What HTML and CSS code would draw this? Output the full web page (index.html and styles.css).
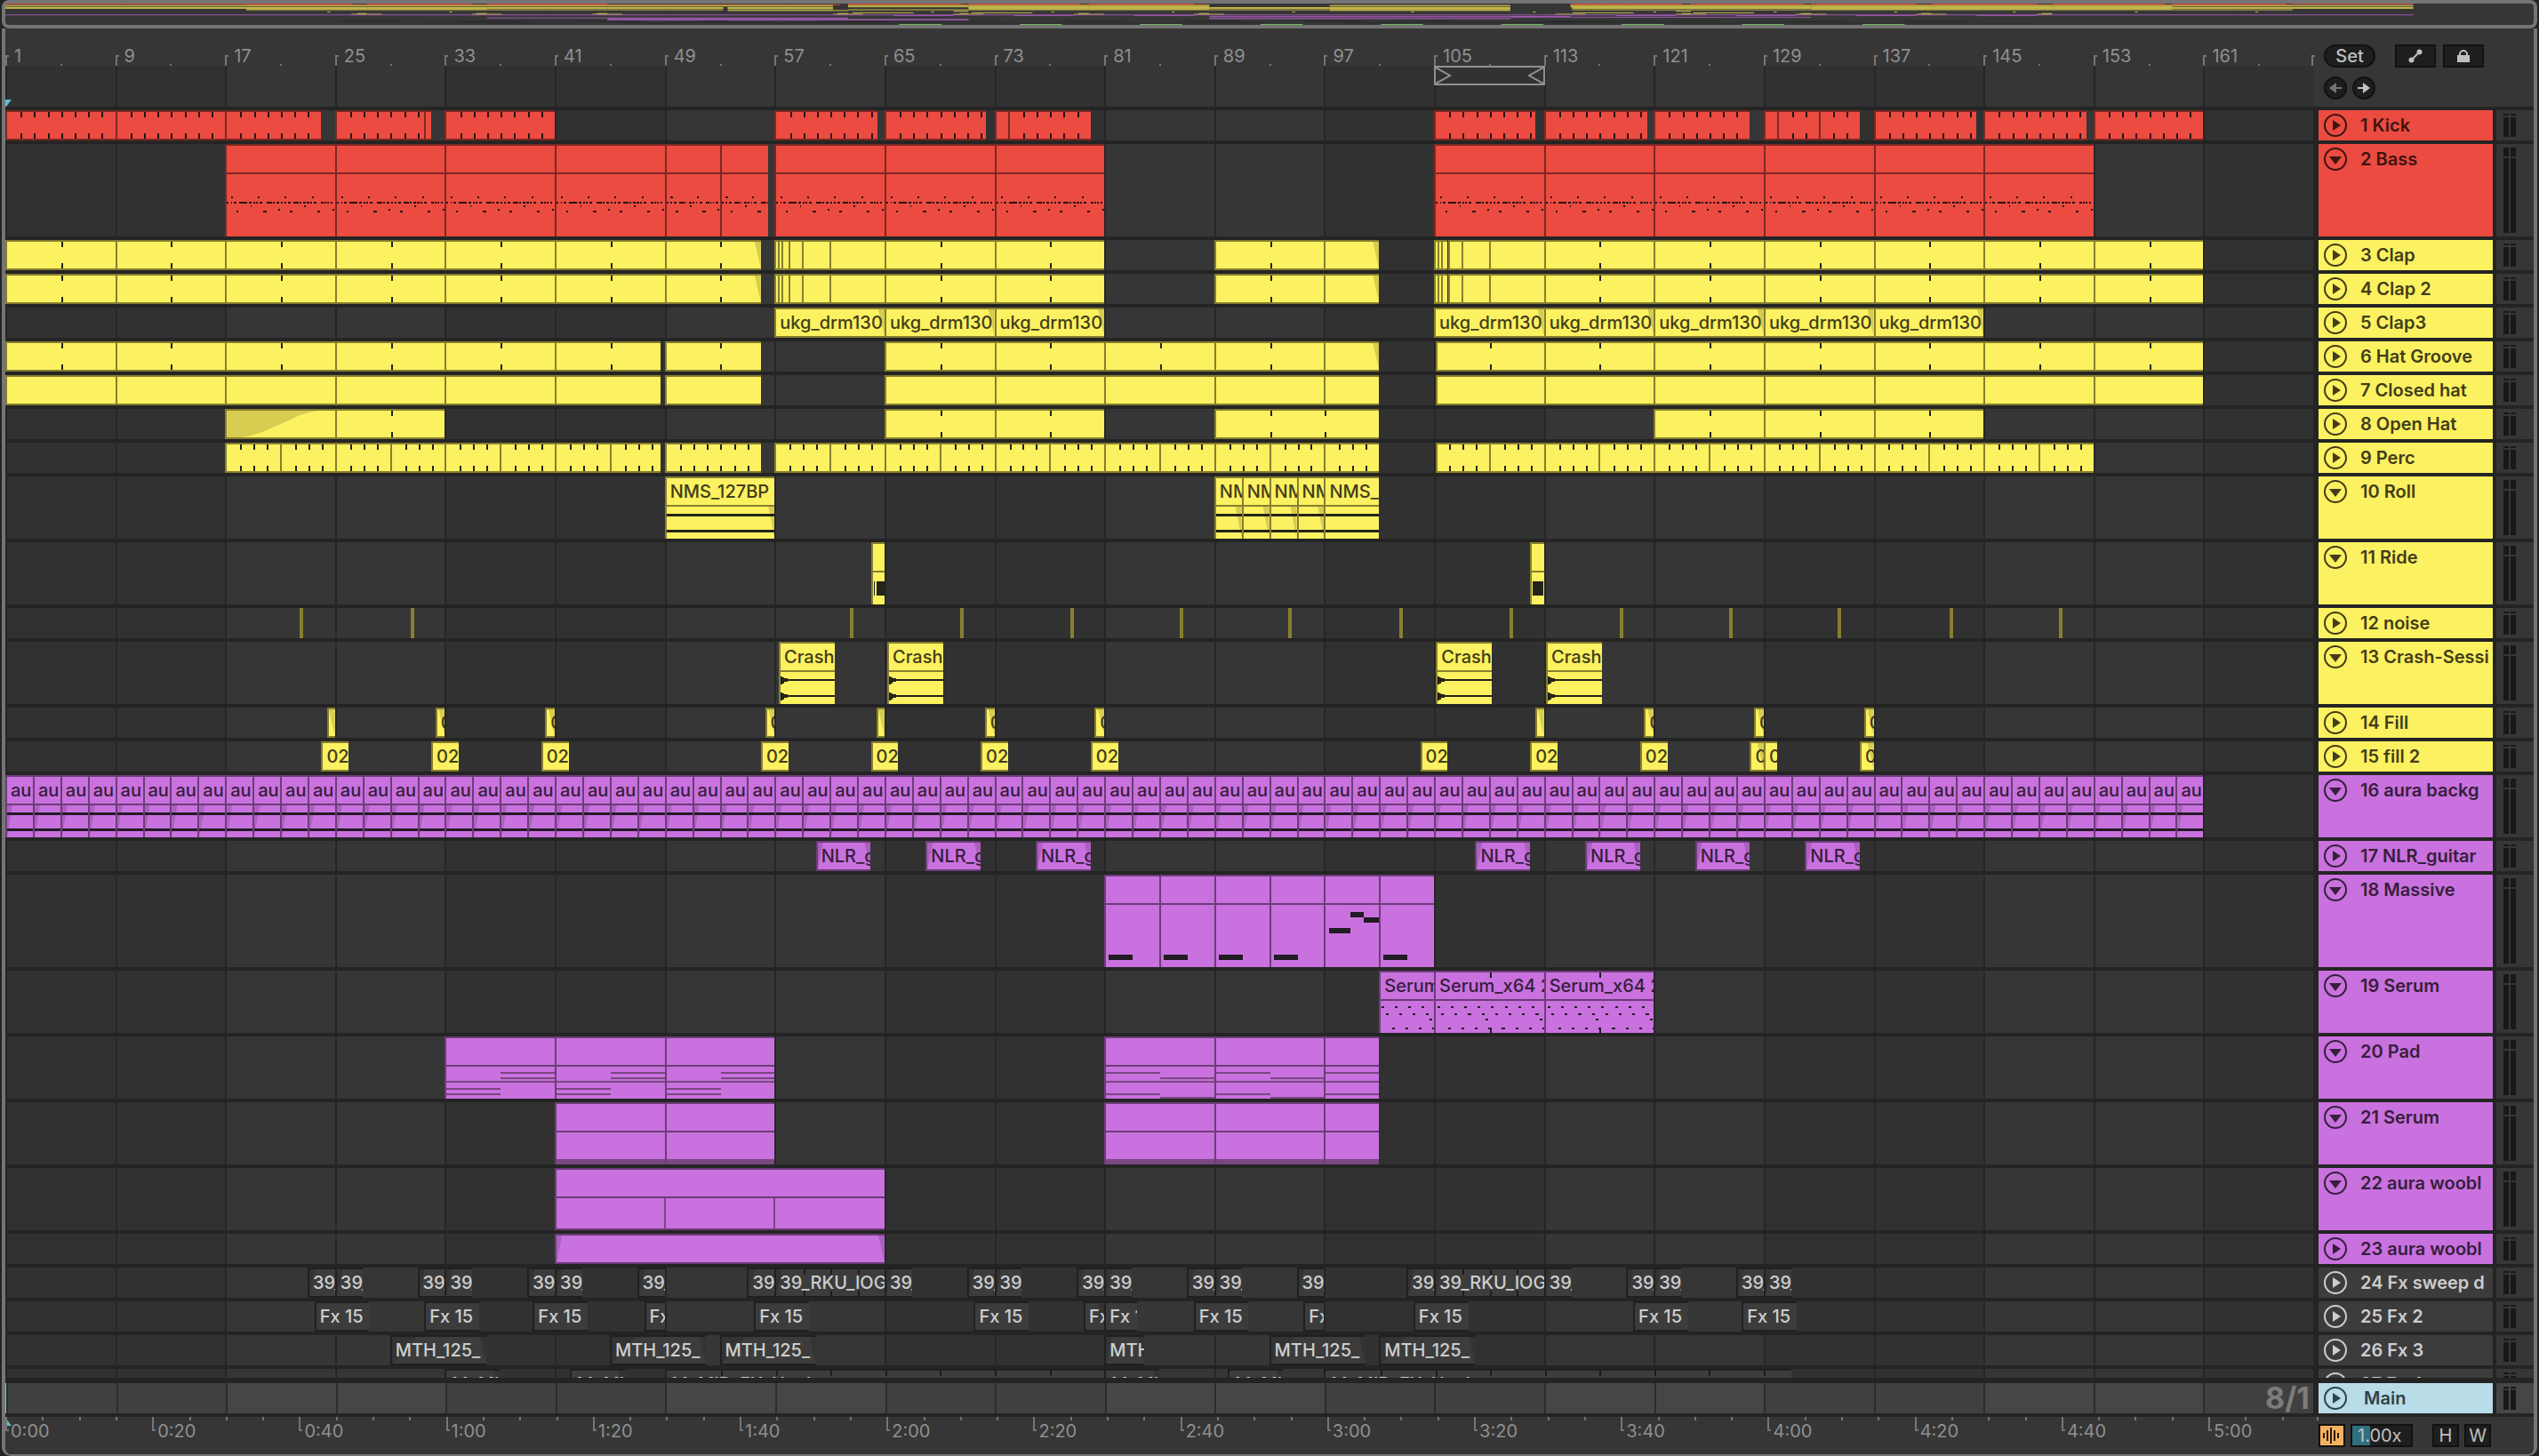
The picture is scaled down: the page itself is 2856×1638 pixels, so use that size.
FILE: index.html
```html
<!DOCTYPE html>
<html lang="en">
<head>
  <meta charset="UTF-8" />
  <meta name="viewport" content="width=device-width, initial-scale=1.0"/>
  <title>Arrangement</title>
  <link rel="stylesheet" href="styles.css">
</head>
<body>
  <div class="overview">
    <svg id="overview" viewBox="0 0 168 29" preserveAspectRatio="none" aria-label="Overview"></svg>
  </div>

  <main class="arrangement">
    <header class="top">
      <div class="timeline">
        <div class="bar-ruler" id="barRuler"></div>
        <div class="scrub grid" id="scrub">
          <svg class="playhead" viewBox="0 0 7 8"><path d="M0 0h7L1 8H0z"/></svg>
        </div>
      </div>
      <div class="top-controls">
        <div class="control-row">
          <button type="button" class="pill">Set</button>
          <button type="button" class="box wide" aria-label="Automation mode">
            <svg width="16" height="16" viewBox="0 0 16 16"><path d="M4 12L12 4" stroke="currentColor" stroke-width="2"/><circle cx="3.5" cy="12.5" r="3" fill="currentColor"/><circle cx="12.5" cy="3.5" r="3" fill="currentColor"/></svg>
          </button>
          <button type="button" class="box wide" aria-label="Lock envelopes">
            <svg width="14" height="14" viewBox="0 0 14 14"><path d="M3 7V5a4 4 0 0 1 8 0v2" fill="none" stroke="currentColor" stroke-width="2"/><path d="M0 6h14v8H0z" fill="currentColor"/></svg>
          </button>
        </div>
        <div class="control-row nav">
          <button type="button" class="round dim" aria-label="Previous locator">
            <svg width="14" height="12" viewBox="0 0 14 12"><path d="M0 6L8 0v5h6v2H8v5z" fill="currentColor"/></svg>
          </button>
          <button type="button" class="round" aria-label="Next locator">
            <svg width="14" height="12" viewBox="0 0 14 12"><path d="M14 6L6 0v5H0v2h6v5z" fill="currentColor"/></svg>
          </button>
        </div>
      </div>
    </header>

    <div class="tracks" id="tracks"></div>

    <section class="track main-track">
      <div class="lane grid"><span class="quantize">8/1</span></div>
      <div class="track-head blue">
        <button type="button" class="fold" aria-label="Unfold Main">
          <svg viewBox="0 0 26 26"><circle cx="13" cy="13" r="12"/><path d="M10 7l9 6-9 6z"/></svg>
        </button>
        <span class="track-name">Main</span>
      </div>
      <div class="meter"><i></i><i></i></div>
    </section>

    <footer class="bottom">
      <div class="time-ruler" id="timeRuler">
        <svg class="playhead" viewBox="0 0 7 8"><path d="M0 0h1l6 8H0z"/></svg>
      </div>
      <div class="bottom-controls">
        <button type="button" class="box wave" aria-label="Waveform zoom">
          <svg width="20" height="18" viewBox="0 0 20 18"><path d="M1 6v6M5 3v12M9 0v18M13 3v12M17 6v6" stroke="currentColor" stroke-width="2" fill="none"/></svg>
        </button>
        <input class="zoom" type="text" value="1.00x" aria-label="Zoom">
        <button type="button" class="box h">H</button>
        <button type="button" class="box">W</button>
      </div>
    </footer>
  </main>
  <script src="script.js"></script>
</body>
</html>
```
FILE: styles.css
```css
* {
  box-sizing: border-box;
}
body {
  margin: 0;
  padding: 0 2px;
  height: 100vh;
  display: flex;
  flex-direction: column;
  background: #242424;
  color: #8f8f8f;
  font-family: Inter, "Liberation Sans", sans-serif;
  font-size: 20px;
  overflow: hidden;
}
button, input {
  font: inherit;
  margin: 0;
  padding: 0;
}
.overview {
  flex: none;
  height: 32px;
  border: 4px solid #757575;
  border-radius: 8px;
  background: #363636;
}
.overview svg {
  display: block;
  width: 100%;
  height: 24px;
}
.arrangement {
  flex: 1;
  min-height: 0;
  display: flex;
  flex-direction: column;
  border: solid #757575;
  border-width: 0 4px 2px;
  border-radius: 0 0 10px 10px;
  overflow: hidden;
}

/* top: ruler + locator controls */
.top {
  flex: none;
  display: flex;
  height: 88px;
  margin-bottom: 4px;
  background: #363636;
}
.timeline {
  flex: 1;
  min-width: 0;
}
.bar-ruler {
  position: relative;
  height: 42px;
}
.bar-ruler .tick {
  position: absolute;
  bottom: 0;
  width: 4px;
  height: 12px;
  border: solid #757575;
  border-width: 2px 0 0 2px;
}
.bar-ruler .dot {
  position: absolute;
  bottom: 0;
  width: 2px;
  height: 2px;
  background: #757575;
}
.bar-ruler .label {
  position: absolute;
  bottom: 0;
  padding-left: 10px;
  line-height: 22px;
}
.scrub {
  position: relative;
  height: 46px;
}
.playhead {
  position: absolute;
  left: 0;
  width: 7px;
  height: 8px;
  fill: #57bfd0;
}
.scrub .playhead {
  bottom: 0;
}
.loop {
  position: absolute;
  top: 0;
  height: 22px;
  border: 2px solid #909090;
  background: #323232;
  display: flex;
  justify-content: space-between;
}
.loop svg {
  width: 18px;
  height: 18px;
  fill: none;
  stroke: #909090;
  stroke-width: 2;
}
.top-controls {
  flex: none;
  width: 248px;
  padding: 18px 0 0 12px;
}
.control-row {
  display: flex;
}
.control-row .wide {
  margin-left: 8px;
}
.control-row .pill + .wide {
  margin-left: 22px;
}
.nav {
  margin-top: 10px;
  gap: 6px;
}
.pill, .round, .box {
  display: flex;
  align-items: center;
  justify-content: center;
  height: 26px;
  border: 2px solid #111;
  background: #1e1e1e;
  color: #c0c0c0;
}
.pill {
  width: 58px;
  border-radius: 13px;
  font-weight: 500;
}
.round {
  width: 26px;
  border-radius: 50%;
}
.round svg {
  flex: none;
}
.round.dim {
  color: #757575;
}
.box {
  width: 30px;
}
.box.wide {
  width: 46px;
}

/* 8 bar lines, shade changes every 16 bars */
.grid {
  background:
    repeating-linear-gradient(90deg, #262626 0 2px, transparent 2px calc(100% * 8 / 168)),
    repeating-linear-gradient(90deg, #313131 0 calc(100% * 16 / 168), #363636 calc(100% * 16 / 168) calc(100% * 32 / 168));
}

.tracks {
  flex: 1;
  min-height: 0;
  display: flex;
  flex-direction: column;
  gap: 4px;
  overflow: hidden;
}
.track {
  flex: none;
  display: flex;
  height: 34px;
}
.track.half {
  height: 70px;
}
.track.tall {
  height: 104px;
}
.lane {
  position: relative;
  flex: 1;
  min-width: 0;
  margin-right: 6px;
  overflow: hidden;
}
.track-head {
  flex: none;
  display: flex;
  align-items: flex-start;
  gap: 15px;
  width: 196px;
  margin-right: 4px;
  padding: 4px 6px;
  overflow: hidden;
  background: var(--clip);
  color: var(--text);
}
.track-name {
  line-height: 26px;
  font-weight: 600;
  white-space: nowrap;
}
.fold {
  flex: none;
  width: 26px;
  height: 26px;
  border: 0;
  background: none;
  color: inherit;
}
.fold svg {
  display: block;
  fill: currentColor;
}
.fold circle {
  fill: none;
  stroke: currentColor;
  stroke-width: 2;
}
.meter {
  flex: none;
  display: flex;
  gap: 2px;
  width: 42px;
  padding: 4px 8px;
  background: #363636;
}
.meter i {
  width: 6px;
  background: linear-gradient(#181818 2px, #363636 2px 4px, #181818 4px);
}
.half .meter i, .tall .meter i {
  background: linear-gradient(#181818 10px, #363636 10px 12px, #181818 12px);
}

.red {
  --clip: #eb4b41;
  --edge: #7d2823;
  --text: #3d1411;
  --note: #241412;
}
.yellow {
  --clip: #fcf160;
  --edge: #877f2f;
  --text: #413d19;
  --note: #24231a;
}
.purple {
  --clip: #c971de;
  --edge: #6c3d78;
  --text: #361e3c;
  --note: #221b24;
}
.grey {
  --clip: #3c3c3c;
  --edge: #202020;
  --text: #cdcdcd;
  --note: #241818;
}
.blue {
  --clip: #b8dce8;
  --text: #32414a;
}

/* clips */
.clip {
  position: absolute;
  top: 0;
  bottom: 0;
  border: solid var(--edge);
  border-width: 2px 0 2px 2px;
  background: var(--clip);
  color: var(--text);
  overflow: hidden;
}
.half .clip, .tall .clip {
  border-bottom-width: 0;
}
.half .clip.closed {
  border-bottom-width: 2px;
}
.clip-name {
  display: block;
  position: relative;
  height: 30px;
  padding-left: 4px;
  line-height: 30px;
  font-weight: 500;
  white-space: nowrap;
}
.half .clip-name, .tall .clip-name {
  height: 32px;
  border-bottom: 2px solid var(--edge);
}
.clip.sliver {
  min-width: 4px;
  background: var(--edge);
}
.clip .tick {
  position: absolute;
  top: 0;
  bottom: 0;
  width: 2px;
  background: linear-gradient(var(--note) 6px, transparent 6px calc(100% - 6px), var(--note) calc(100% - 6px));
}
.fade {
  position: absolute;
  top: 0;
  bottom: 0;
  background: rgba(0, 0, 0, .15);
}
.half .fade {
  top: 32px;
}
.fade.in {
  left: 0;
  width: 6px;
  clip-path: polygon(0 0, 100% 0, 0 100%);
}
.fade.out {
  right: 0;
  width: 7px;
  clip-path: polygon(0 0, 100% 0, 100% 100%);
}
.fade.long {
  left: 0;
  width: 100%;
  clip-path: polygon(0 0, 84% 0, 78% 4%, 68% 16%, 56% 38%, 42% 64%, 30% 84%, 22% 94%, 14% 100%, 0 100%);
}
.fade.wide {
  width: 26%;
}
.notes {
  position: absolute;
  left: 0;
  top: 32px;
  width: 100%;
  height: calc(100% - 32px);
  fill: var(--note);
}
.notes .soft {
  fill: #78487f;
}

/* main track and time ruler */
.main-track {
  margin-top: 6px;
}
.main-track .lane {
  display: flex;
  align-items: center;
  justify-content: flex-end;
  padding-right: 4px;
  border-left: 1px solid #57d0dc;
  background:
    repeating-linear-gradient(90deg, #2c2c2c 0 2px, transparent 2px calc(100% * 8 / 168)),
    repeating-linear-gradient(90deg, #404040 0 calc(100% * 16 / 168), #464646 calc(100% * 16 / 168) calc(100% * 32 / 168));
}
.main-track .track-head {
  gap: 19px;
}
.main-track .meter {
  background: #464646;
}
.quantize {
  font-size: 34px;
  font-weight: 700;
  line-height: 34px;
  color: #7c7c7c;
}
.bottom {
  flex: none;
  display: flex;
  height: 42px;
  margin-top: 4px;
  background: #363636;
}
.time-ruler {
  position: relative;
  flex: 1;
  min-width: 0;
}
.time-ruler .tick {
  position: absolute;
  top: 0;
  width: 4px;
  height: 16px;
  border: solid #757575;
  border-width: 0 0 2px 2px;
}
.time-ruler .dot {
  position: absolute;
  top: 0;
  width: 2px;
  height: 4px;
  background: #757575;
}
.time-ruler .label {
  position: absolute;
  top: 4px;
  padding-left: 6px;
  line-height: 24px;
}
.time-ruler .playhead {
  top: 2px;
}
.bottom-controls {
  flex: none;
  display: flex;
  width: 242px;
  padding-top: 8px;
  gap: 6px;
}
.box.wave {
  background: #f5b060;
  color: #2a1c0c;
}
.zoom {
  width: 70px;
  height: 26px;
  padding-left: 6px;
  border: 2px solid #111;
  background: linear-gradient(90deg, #2f7080 20px, #1e1e1e 20px);
  color: #c0c0c0;
}
.box.h {
  margin-left: 16px;
}
```
FILE: script.js
```js
const BARS = 168;
const pct = (bars) => (bars / BARS * 100) + "%";

// clip: s/e = start/end bar, n = name, t = tick interval, cls, fi/fo = fades, notes = [x, y, w, h] in bars / px
const c = (s, e, o = {}) => ({ s, e, ...o });

// consecutive clips that meet at the given bars
function cuts(points, o = {}) {
  const list = [];
  for (let i = 0; i < points.length - 1; i++) list.push(c(points[i], points[i + 1], o));
  return list;
}

function range(from, to, step) {
  const list = [];
  for (let i = from; i <= to; i += step) list.push(i);
  return list;
}

const bassMid = [[0, .15], [.3, .1], [.55, .2], [.95, .4], [1.4, .1], [1.65, .2], [1.95, .15], [2.2, .1], [2.45, .2], [2.95, .25], [3.25, .12], [3.45, .12], [3.7, .15]];
const bassNotes = [];
for (let i = 0; i < 8; i += 2) {
  bassNotes.push([i + .3, 25, .14, 2], [i + .7, 41, i % 4 ? .24 : .14, 2]);
}
for (let i = 0; i < 8; i += 4) {
  bassMid.forEach(([x, w]) => bassNotes.push([x + i, 31, w, 2]));
  bassNotes.push([i + 1.75, 35, .12, 2], [i + 3.8, 39, .14, 2]);
}

const serumNotes = [];
for (let i = 0; i < 8; i++) {
  serumNotes.push([i + .1, 6, .2, 2], [i + .4, 14, .2, 2], [i + .9, 30, .2, 2]);
  if (i % 4 === 3) serumNotes.push([i + .7, 20, .2, 2]);
}

const wave = (len) => [[0, 8, len, 3], [0, 26, len, 3]];
const crashWave = [[0, 5, .12, 9], [.12, 6, .12, 7], [.24, 7, .3, 4], [.54, 8, 4, 2], [0, 23, .12, 9], [.12, 24, .12, 7], [.24, 25, .3, 4], [.54, 26, 4, 2]];
const low = [[.2, 56, 1.8, 6]];
const padA = [[0, 16, 8, 2], [0, 24, 4, 2], [0, 30, 4, 2], [4, 6, 4, 2], [4, 12, 4, 2]];
const padB = [[0, 6, 4, 2], [0, 16, 8, 2], [0, 30, 4, 2], [4, 12, 4, 2], [4, 34, 4, 2]];
const band = [[-1, 30, 10, 6]];

const kick = { t: 1 }, four = { t: 4 };
const clapSplit = [57, 57.25, 57.5, 58, 59, 61, 65];
const clap = [
  ...cuts(range(1, 49, 8), four), c(49, 56, { t: 4, fo: 1 }),
  ...cuts(clapSplit), ...cuts([65, 73, 81], four), c(89, 97, four), c(97, 101, { fo: 1 }),
  ...cuts(clapSplit.map(b => b + 48)), ...cuts(range(113, 161, 8), four)
];
const ukg = { n: "ukg_drm130", fo: 1 };
const fx39 = { n: "39_", fi: 1 };
const mth = { n: "MTH_125_", fi: 1, fo: 1, wide: 1 };
const mid = { n: "14_MID_FX_Hook", t: 4 };

const tracks = [
  ["Kick", "red", "", [...cuts([1, 9, 17, 24], kick), ...cuts([25, 31.5, 32], kick), c(33, 41, kick), c(57, 64.5, kick), c(65, 72.4, kick), ...cuts([73, 74, 80], kick),
    c(105, 112.4, kick), c(113, 120.5, kick), c(121, 128, kick), ...cuts([129, 130, 133, 136], kick), c(137, 144.5, kick), c(145, 152.5, kick), c(153, 161, kick)]],
  ["Bass", "red", "tall", [...cuts([17, 25, 33, 41, 49, 53, 56.5], { notes: bassNotes }), ...cuts([57, 65, 73, 81], { notes: bassNotes }), ...cuts(range(105, 153, 8), { notes: bassNotes })]],
  ["Clap", "yellow", "", clap],
  ["Clap 2", "yellow", "", clap],
  ["Clap3", "yellow", "", [...cuts([57, 65, 73, 81], ukg), ...cuts(range(105, 145, 8), ukg)]],
  ["Hat Groove", "yellow", "", [...cuts([1, 9, 17, 25, 33, 41, 48.7], four), c(49, 56, four), ...cuts([65, 73, 81, 89, 97], four), c(97, 101, { fo: 1 }), ...cuts([105.1, 113, 121, 129, 137, 145, 153, 161], four)]],
  ["Closed hat", "yellow", "", [...cuts([1, 9, 17, 25, 33, 41, 48.7]), c(49, 56), ...cuts([65, 73, 81, 89, 97, 101]), ...cuts([105.1, 113, 121, 129, 137, 145, 153, 161])]],
  ["Open Hat", "yellow", "", [c(17, 25, { long: 1 }), c(25, 33, four), ...cuts([65, 73, 81], four), c(89, 101, four), ...cuts([121, 129, 137, 145], four)]],
  ["Perc", "yellow", "", [...cuts([...range(17, 45, 4), 48.7], kick), c(49, 56, kick), ...cuts(range(57, 101, 4), kick), ...cuts([105.1, ...range(109, 153, 4)], kick)]],
  ["Roll", "yellow", "half", [c(49, 57, { n: "NMS_127BP", notes: wave(8), fo: 1 }), ...cuts([89, 91, 93, 95, 97], { n: "NM", notes: wave(2), fo: 1 }), c(97, 101, { n: "NMS_", notes: wave(4) })]],
  ["Ride", "yellow", "half", [c(64, 65, { notes: [[.05, 10, .12, 16], [.3, 10, .7, 16]] }), c(112, 113, { notes: [[.1, 10, .9, 16]] })]],
  ["noise", "yellow", "", [22.4, 30.5, 62.5, 70.5, 78.5, 86.5, 94.4, 102.5, 110.5, 118.5, 126.5, 134.4, 142.5, 150.5].map(b => c(b, b + .2, { cls: "sliver" }))],
  ["Crash-Sessi", "yellow", "half", [57.3, 65.2, 105.15, 113.15].map(b => c(b, b + 4.05, { n: "Crash", notes: crashWave }))],
  ["Fill", "yellow", "", [24.4, 32.3, 40.3, 56.3, 64.4, 72.3, 80.3, 112.4, 120.3, 128.3, 136.3].map(b => c(b, Math.ceil(b), { n: b % 8 > .35 ? "" : "0", fo: 1 }))],
  ["fill 2", "yellow", "", [...[24, 32, 40, 56, 64, 72, 80, 104, 112, 120].map(b => c(b, b + 2, { n: "02" })), c(128, 129, { n: "0", fo: 1 }), c(129, 130, { n: "0" }), c(136, 137, { n: "0", fo: 1 })]],
  ["aura backg", "purple", "half", cuts(range(1, 161, 2), { n: "au", notes: wave(2), fi: 1 })],
  ["NLR_guitar", "purple", "", [60, 68, 76, 108, 116, 124, 132].map(b => c(b, b + 4, { n: "NLR_g", fi: 1, fo: 1 }))],
  ["Massive", "purple", "tall", [...cuts([81, 85, 89, 93, 97], { notes: low }), c(97, 101, { notes: [[.3, 26, 1.6, 6], [1.9, 8, 1, 6], [2.9, 14, 1.1, 6]] }), c(101, 105, { notes: low })]],
  ["Serum", "purple", "half", [c(101, 105, { n: "Serum", notes: serumNotes }), ...cuts([105, 113, 121], { n: "Serum_x64 2", notes: serumNotes, t: 4 })]],
  ["Pad", "purple", "half", [...cuts([33, 41, 49, 57], { notes: padA, soft: 1 }), ...cuts([81, 89, 97, 101], { notes: padB, soft: 1 })]],
  ["Serum", "purple", "half", [...cuts([41, 49, 57], { notes: band, soft: 1 }), ...cuts([81, 89, 97, 101], { notes: band, soft: 1 })]],
  ["aura woobl", "purple", "half", [c(41, 65, { cls: "closed", soft: 1, notes: [[7.9, 0, .12, 36], [15.9, 0, .12, 36]] })]],
  ["aura woobl", "purple", "", [c(41, 65, { fi: 1, fo: 1 })]],
  ["Fx sweep d", "grey", "", [23, 25, 31, 33, 39, 41, 47, 55, 65, 71, 73, 79, 81, 87, 89, 95, 103, 113, 119, 121, 127, 129].map(b => c(b, b + 2, fx39)).concat([57, 105].map(b => c(b, b + 8, { n: "39_RKU_IOG", fi: 1, t: 2 })))],
  ["Fx 2", "grey", "", [...[23.5, 31.5, 39.4, 55.5, 71.5, 87.5, 103.5, 119.5, 127.4].map(b => c(b, b + 4, { n: "Fx 15" })), c(47.5, 49, { n: "Fx" }), c(79.5, 81, { n: "Fx", fo: 1 }), c(81, 83.4, { n: "Fx 1" }), c(95.5, 97, { n: "Fx" })]],
  ["Fx 3", "grey", "", [...[29, 45, 53, 93, 101].map(b => c(b, b + 7, mth)), c(81, 83.9, { n: "MTH", fi: 1, fo: 1 })]],
  ["Fx 4", "grey", "", [...[33, 42.1, 81, 90].map(b => c(b, b + 4, { n: "14_MI", fo: 1 })), c(49, 81, mid), c(97, 131, mid)]]
];

function el(tag, cls, parent, text) {
  const node = document.createElement(tag);
  if (cls) node.className = cls;
  if (text !== undefined) node.textContent = text;
  if (parent) parent.appendChild(node);
  return node;
}

function drawClip(clip, lane, size) {
  const len = clip.e - clip.s;
  const box = el("div", "clip " + (clip.cls || ""), lane);
  box.style.left = pct(clip.s - 1);
  box.style.width = pct(len);
  if (clip.fi) el("i", "fade in" + (clip.wide ? " wide" : ""), box);
  if (clip.fo) el("i", "fade out", box);
  if (clip.long) el("i", "fade long", box);
  if (clip.notes) {
    const h = size === "tall" ? 70 : 36;
    const rects = clip.notes.map(([x, y, w, nh]) => `<rect x="${x}" y="${y}" width="${w}" height="${nh}"/>`).join("");
    box.insertAdjacentHTML("beforeend", `<svg class="notes" viewBox="0 0 ${len} ${h}" preserveAspectRatio="none" shape-rendering="crispEdges"><g class="${clip.soft ? "soft" : ""}">${rects}</g></svg>`);
  }
  if (clip.n || size) el("span", "clip-name", box, clip.n || "");
  if (clip.t) {
    for (let b = Math.floor(clip.s) + clip.t; b < clip.e; b += clip.t) {
      el("i", "tick", box).style.left = ((b - clip.s) / len * 100) + "%";
    }
  }
}

const list = document.getElementById("tracks");
const colors = { red: "#d9493f", yellow: "#dccf4e", purple: "#ad5fbf", grey: "#2c2c2c" };
let map = "";

tracks.forEach(([name, color, size, clips], i) => {
  const row = el("section", `track ${size} ${color}`, list);
  const lane = el("div", "lane grid", row);
  clips.forEach(clip => {
    drawClip(clip, lane, size);
    map += `<rect x="${clip.s - 1}" y="${i}" width="${clip.e - clip.s}" height="1" fill="${colors[color]}"/>`;
  });

  const head = el("div", "track-head", row);
  const fold = el("button", "fold", head);
  fold.type = "button";
  fold.setAttribute("aria-label", (size ? "Fold " : "Unfold ") + name);
  fold.innerHTML = `<svg viewBox="0 0 26 26"><circle cx="13" cy="13" r="12"/><path d="${size ? "M6 10h14l-7 9z" : "M10 7l9 6-9 6z"}"/></svg>`;
  el("span", "track-name", head, `${i + 1} ${name}`);
  el("div", "meter", row).innerHTML = "<i></i><i></i>";
});

for (let b = 59.4; b < 125; b += 8) map += `<rect x="${b}" y="28" width="2.8" height="1" fill="#7fd06a"/>`;
document.getElementById("overview").innerHTML = map;

// bar ruler
const barRuler = document.getElementById("barRuler");
for (let b = 1; b <= 169; b += 4) {
  const major = b % 8 === 1;
  const tick = el("i", major ? "tick" : "dot", barRuler);
  tick.style.left = b === 169 ? "calc(100% - 2px)" : pct(b - 1);
  if (major && b < 169) el("span", "label", barRuler, b).style.left = pct(b - 1);
}

const loop = el("div", "loop", document.getElementById("scrub"));
loop.style.left = pct(104);
loop.style.width = `calc(${pct(8)} + 1px)`;
loop.innerHTML = '<svg viewBox="0 0 18 18"><path d="M0 0l16 9-16 9"/></svg><svg viewBox="0 0 18 18"><path d="M18 0L2 9l16 9"/></svg>';

// time ruler, 128 bpm: 20 seconds = 32/3 bars
const timeRuler = document.getElementById("timeRuler");
for (let s = 0; s <= 315; s += 5) {
  const left = s === 315 ? "calc(100% - 2px)" : pct(s * 32 / 60);
  const major = s % 20 === 0;
  el("i", major ? "tick" : "dot", timeRuler).style.left = left;
  if (major) el("span", "label", timeRuler, Math.floor(s / 60) + ":" + String(s % 60).padStart(2, "0")).style.left = left;
}
```
